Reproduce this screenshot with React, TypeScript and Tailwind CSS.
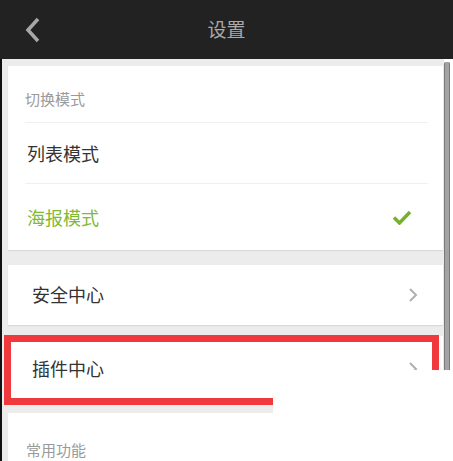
import React from 'react';

const font = { fontFamily: '"Noto Sans CJK SC", "Noto Sans", sans-serif' };

function Chevron() {
  return (
    <svg width="10" height="16" viewBox="0 0 10 16" className="mr-[25px]">
      <path d="M2 2 L8 8 L2 14" fill="none" stroke="#b0b0b0" strokeWidth="2" />
    </svg>
  );
}

export default function App() {
  return (
    <div className="relative w-[453px] h-[461px] overflow-hidden bg-white" style={font}>
      <div className="h-[59px] bg-[#222222] flex items-center relative">
        <svg width="18" height="28" viewBox="0 0 18 28" className="ml-[23px]">
          <path d="M15 3 L5 14 L15 25" fill="none" stroke="#a8a8a8" strokeWidth="3.5" />
        </svg>
        <div className="absolute left-0 right-0 text-center text-[19px] text-[#a9a9a9] pointer-events-none">设置</div>
      </div>

      <div className="flex h-[402px]">
        <div className="w-[2px] bg-[#111]" />
        <div className="flex-1 bg-[#ececec] pt-[7px] pl-[6px] pr-[1px] flex flex-col">
          <div className="bg-white shadow-[0_1px_1px_rgba(0,0,0,0.08)] pl-[17px] pr-[15px]">
            <div className="h-[57px] flex items-center text-[15px] text-[#9a9a9a] border-b border-[#f0f0f0] pt-[10px]">切换模式</div>
            <div className="h-[61px] flex items-center text-[18px] text-[#333] border-b border-[#f0f0f0] pl-[2px]">列表模式</div>
            <div className="h-[66px] flex items-center justify-between text-[18px] text-[#7fba35] pl-[2px]">
              <span>海报模式</span>
              <svg width="20" height="15" viewBox="0 0 20 15" className="mr-[16px]">
                <path d="M2 7.5 L7.5 13 L18 2" fill="none" stroke="#76b12c" strokeWidth="3.5" />
              </svg>
            </div>
          </div>

          <div className="mt-[15px] h-[60px] bg-white shadow-[0_1px_1px_rgba(0,0,0,0.08)] flex items-center justify-between pl-[24px]">
            <span className="text-[18px] text-[#333]">安全中心</span>
            <Chevron />
          </div>

          <div className="mt-[11px] h-[66px] bg-white flex items-center justify-between pl-[24px]">
            <span className="text-[18px] text-[#333]">插件中心</span>
            <Chevron />
          </div>

          <div className="mt-[11px] flex-1 bg-white pl-[18px] pt-[24px]">
            <span className="text-[15px] text-[#9a9a9a]">常用功能</span>
          </div>
        </div>
        <div className="w-[6px] mt-[3px] bg-[#a3a3a3] border-x border-[#7a7a7a] rounded-t-[2px]" />
        <div className="w-[3px] bg-white" />
      </div>

      <div className="absolute left-[4px] top-[335px] w-[435px] h-[70px] border-[7px] border-[#f0393d]" />
      <div className="absolute left-[273px] top-[370px] right-0 bottom-0 bg-white" />
    </div>
  );
}
